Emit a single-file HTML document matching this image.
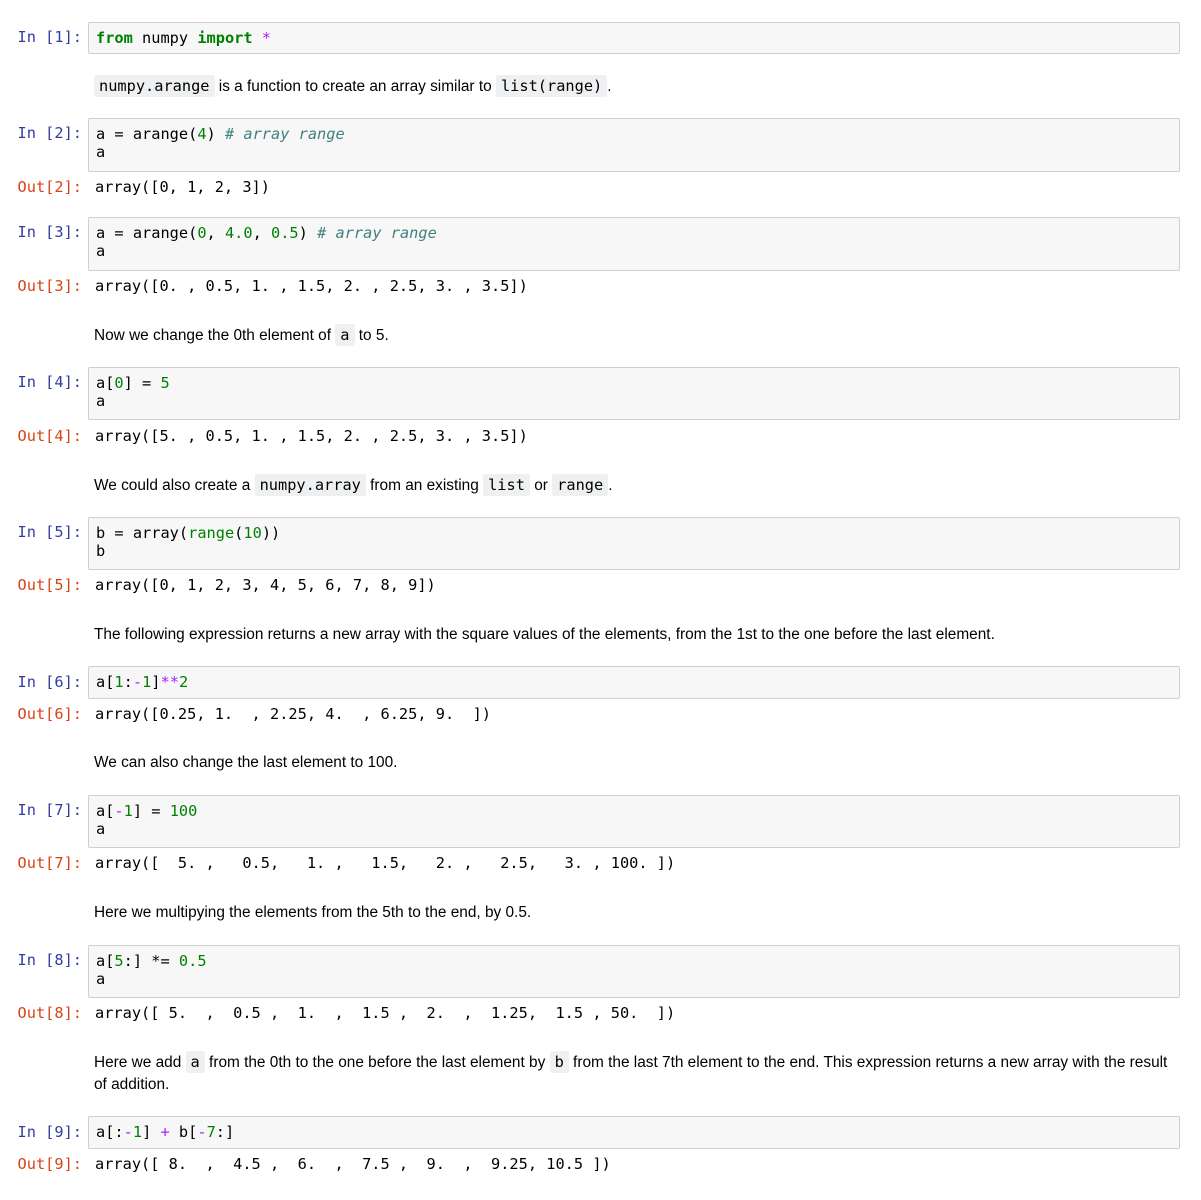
<!DOCTYPE html>
<html><head><meta charset="utf-8"><style>
body{margin:0;background:#fff;width:1201px;height:1200px;position:relative;overflow:hidden;}
.m{font-family:"DejaVu Sans Mono","Liberation Mono",monospace;font-size:15.3px;color:#000;}
.p{position:absolute;left:0;width:82px;text-align:right;line-height:18px;white-space:pre;}
.in{color:#303F9F}.out{color:#D84315}
.box{position:absolute;left:88px;width:1092px;border:1px solid #cfcfcf;border-radius:2px;background:#f7f7f7;box-sizing:border-box;padding:6px 7px;line-height:18px;white-space:pre;}
.o{position:absolute;left:95px;line-height:18px;white-space:pre;}
.t{position:absolute;left:94px;font-family:"Liberation Sans",sans-serif;font-size:15.4px;line-height:22px;color:#000;}
.t code{font-family:"DejaVu Sans Mono",monospace;font-size:15.3px;background:#eff0f1;padding:2px 5px;border-radius:2px;}
.k{color:#008000;font-weight:bold}.n{color:#008000}.op{color:#AA22FF}.c{color:#408080;font-style:italic}.b{color:#008000}
</style></head><body>
<div class="m p in" style="top:28px">In [1]:</div>
<div class="m box" style="top:22px;height:32px"><span class="k">from</span> numpy <span class="k">import</span> <span class="op">*</span></div>
<div class="t" style="top:75px"><code>numpy.arange</code> is a function to create an array similar to <code>list(range)</code>.</div>

<div class="m p in" style="top:124px">In [2]:</div>
<div class="m box" style="top:118px;height:54px">a = arange(<span class="n">4</span>) <span class="c"># array range</span>
a</div>
<div class="m p out" style="top:178px">Out[2]:</div>
<div class="m o" style="top:178px">array([0, 1, 2, 3])</div>

<div class="m p in" style="top:223px">In [3]:</div>
<div class="m box" style="top:217px;height:54px">a = arange(<span class="n">0</span>, <span class="n">4.0</span>, <span class="n">0.5</span>) <span class="c"># array range</span>
a</div>
<div class="m p out" style="top:277px">Out[3]:</div>
<div class="m o" style="top:277px">array([0. , 0.5, 1. , 1.5, 2. , 2.5, 3. , 3.5])</div>

<div class="t" style="top:324px">Now we change the 0th element of <code>a</code> to 5.</div>

<div class="m p in" style="top:373px">In [4]:</div>
<div class="m box" style="top:367px;height:53px">a[<span class="n">0</span>] = <span class="n">5</span>
a</div>
<div class="m p out" style="top:427px">Out[4]:</div>
<div class="m o" style="top:427px">array([5. , 0.5, 1. , 1.5, 2. , 2.5, 3. , 3.5])</div>

<div class="t" style="top:474px">We could also create a <code>numpy.array</code> from an existing <code>list</code> or <code>range</code>.</div>

<div class="m p in" style="top:523px">In [5]:</div>
<div class="m box" style="top:517px;height:53px">b = array(<span class="b">range</span>(<span class="n">10</span>))
b</div>
<div class="m p out" style="top:576px">Out[5]:</div>
<div class="m o" style="top:576px">array([0, 1, 2, 3, 4, 5, 6, 7, 8, 9])</div>

<div class="t" style="top:624px">The following expression returns a new array with the square values of the elements, from the 1st to the one before the last element.</div>

<div class="m p in" style="top:673px">In [6]:</div>
<div class="m box" style="top:666px;height:33px">a[<span class="n">1</span>:<span class="op">-</span><span class="n">1</span>]<span class="op">**</span><span class="n">2</span></div>
<div class="m p out" style="top:705px">Out[6]:</div>
<div class="m o" style="top:705px">array([0.25, 1.  , 2.25, 4.  , 6.25, 9.  ])</div>

<div class="t" style="top:752px">We can also change the last element to 100.</div>

<div class="m p in" style="top:801px">In [7]:</div>
<div class="m box" style="top:795px;height:53px">a[<span class="op">-</span><span class="n">1</span>] = <span class="n">100</span>
a</div>
<div class="m p out" style="top:854px">Out[7]:</div>
<div class="m o" style="top:854px">array([  5. ,   0.5,   1. ,   1.5,   2. ,   2.5,   3. , 100. ])</div>

<div class="t" style="top:902px">Here we multipying the elements from the 5th to the end, by 0.5.</div>

<div class="m p in" style="top:951px">In [8]:</div>
<div class="m box" style="top:945px;height:53px">a[<span class="n">5</span>:] *= <span class="n">0.5</span>
a</div>
<div class="m p out" style="top:1004px">Out[8]:</div>
<div class="m o" style="top:1004px">array([ 5.  ,  0.5 ,  1.  ,  1.5 ,  2.  ,  1.25,  1.5 , 50.  ])</div>

<div class="t" style="top:1051px;width:1100px">Here we add <code>a</code> from the 0th to the one before the last element by <code>b</code> from the last 7th element to the end. This expression returns a new array with the result<br>of addition.</div>

<div class="m p in" style="top:1123px">In [9]:</div>
<div class="m box" style="top:1116px;height:33px">a[:<span class="op">-</span><span class="n">1</span>] <span class="op">+</span> b[<span class="op">-</span><span class="n">7</span>:]</div>
<div class="m p out" style="top:1155px">Out[9]:</div>
<div class="m o" style="top:1155px">array([ 8.  ,  4.5 ,  6.  ,  7.5 ,  9.  ,  9.25, 10.5 ])</div>
</body></html>
